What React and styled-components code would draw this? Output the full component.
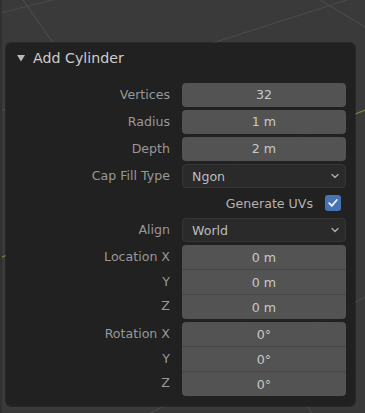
import { Fragment } from "react";
import styled, { createGlobalStyle } from "styled-components";

const GlobalStyle = createGlobalStyle`
  html, body {
    margin: 0;
    padding: 0;
    background: #393939;
  }
  body {
    font-family: "DejaVu Sans", "Liberation Sans", sans-serif;
  }
`;

const Viewport = styled.div`
  position: relative;
  width: 365px;
  height: 413px;
  box-sizing: border-box;
  padding: 43px 10px 0 6px;
  background: #3a3a3a;
  overflow: hidden;
`;

const GridLines = styled.svg`
  position: absolute;
  inset: 0;
  width: 100%;
  height: 100%;
`;

const Panel = styled.section`
  position: relative;
  background: rgba(32, 32, 32, 0.96);
  border-radius: 5px;
  box-shadow: 0 0 0 1px rgba(20, 20, 20, 0.45);
  padding: 0 9px 10px 11px;
`;

const Header = styled.div`
  display: flex;
  align-items: center;
  gap: 8px;
  height: 30px;
  color: #cdcdcd;
  font-size: 14.2px;
`;

const Body = styled.div`
  display: grid;
  grid-template-columns: 1fr 164px;
  column-gap: 12px;
  row-gap: 3px;
  padding-top: 10px;
`;

const Label = styled.div`
  text-align: right;
  line-height: 24px;
  height: 24px;
  font-size: 12.6px;
  color: #989898;
  white-space: nowrap;
`;

const NumField = styled.div`
  height: 24px;
  line-height: 24px;
  border-radius: 4px;
  background: #535353;
  color: #c9c9c9;
  font-size: 12.6px;
  text-align: center;
`;

const Select = styled.div`
  display: flex;
  align-items: center;
  justify-content: space-between;
  height: 24px;
  box-sizing: border-box;
  padding: 0 5px 0 9px;
  border: 1px solid #363636;
  border-radius: 4px;
  background: #2a2a2a;
  color: #bdbdbd;
  font-size: 12.6px;
`;

const CheckRow = styled.label`
  grid-column: 1 / -1;
  display: flex;
  justify-content: flex-end;
  align-items: center;
  gap: 12px;
  height: 24px;
  padding-right: 5px;
  color: #b3b3b3;
  font-size: 12.6px;
`;

const Box = styled.span`
  display: flex;
  align-items: center;
  justify-content: center;
  width: 16px;
  height: 16px;
  border-radius: 3px;
  background: #4772b3;
`;

const Group = styled.div`
  grid-column: 1 / -1;
  display: grid;
  grid-template-columns: 1fr 164px;
  grid-template-rows: repeat(3, 1fr);
  column-gap: 12px;
  height: 74px;
`;

const Stack = styled.div`
  grid-column: 2;
  grid-row: 1 / 4;
  display: flex;
  flex-direction: column;
  border-radius: 4px;
  overflow: hidden;
  background: #535353;
`;

const Cell = styled.div`
  flex: 1;
  display: flex;
  align-items: center;
  justify-content: center;
  color: #c9c9c9;
  font-size: 12.6px;
  & + & {
    border-top: 1px solid #474747;
  }
`;

const GroupLabel = styled(Label)`
  grid-column: 1;
  height: auto;
  line-height: 1;
  display: flex;
  align-items: center;
  justify-content: flex-end;
`;

const Chevron = () => (
  <svg width="10" height="8" viewBox="0 0 10 8">
    <polyline points="2,2.5 5,5.5 8,2.5" fill="none" stroke="#aaaaaa" strokeWidth="1.4" strokeLinecap="round" strokeLinejoin="round" />
  </svg>
);

const Check = () => (
  <svg width="12" height="12" viewBox="0 0 12 12">
    <polyline points="2.2,6.2 4.8,8.8 9.8,3" fill="none" stroke="#f2f2f2" strokeWidth="1.8" strokeLinecap="round" strokeLinejoin="round" />
  </svg>
);

const Triangle = () => (
  <svg width="8" height="8" viewBox="0 0 8 8">
    <polygon points="0,1 8,1 4,7.5" fill="#b8b8b8" />
  </svg>
);

const fields = [
  { label: "Vertices", value: "32" },
  { label: "Radius", value: "1 m" },
  { label: "Depth", value: "2 m" },
];

const groups = [
  { labels: ["Location X", "Y", "Z"], values: ["0 m", "0 m", "0 m"] },
  { labels: ["Rotation X", "Y", "Z"], values: ["0°", "0°", "0°"] },
];

const App = () => {
  return (
    <>
      <GlobalStyle />
      <Viewport>
        <GridLines viewBox="0 0 365 413">
          <g stroke="#4a4a4a" strokeWidth="1.2" fill="none">
            <line x1="0" y1="13" x2="53" y2="0" />
            <line x1="23" y1="0" x2="312" y2="413" />
            <line x1="0" y1="111" x2="347" y2="0" />
            <line x1="320" y1="0" x2="365" y2="27" />
            <line x1="145" y1="416" x2="365" y2="297" />
          </g>
          <line x1="0" y1="258" x2="365" y2="110" stroke="#6f8a35" strokeWidth="1.2" />
          <rect x="0" y="0" width="2" height="413" fill="#303030" />
        </GridLines>
        <Panel>
          <Header>
            <Triangle />
            <span>Add Cylinder</span>
          </Header>
          <Body>
            {fields.map((f) => (
              <Fragment key={f.label}>
                <Label>{f.label}</Label>
                <NumField>{f.value}</NumField>
              </Fragment>
            ))}
            <Label>Cap Fill Type</Label>
            <Select>
              <span>Ngon</span>
              <Chevron />
            </Select>
            <CheckRow>
              <span>Generate UVs</span>
              <Box>
                <Check />
              </Box>
            </CheckRow>
            <Label>Align</Label>
            <Select>
              <span>World</span>
              <Chevron />
            </Select>
            {groups.map((g, i) => (
              <Group key={i}>
                {g.labels.map((l) => (
                  <GroupLabel key={l}>{l}</GroupLabel>
                ))}
                <Stack>
                  {g.values.map((v, j) => (
                    <Cell key={j}>{v}</Cell>
                  ))}
                </Stack>
              </Group>
            ))}
          </Body>
        </Panel>
      </Viewport>
    </>
  );
};

export default App;
